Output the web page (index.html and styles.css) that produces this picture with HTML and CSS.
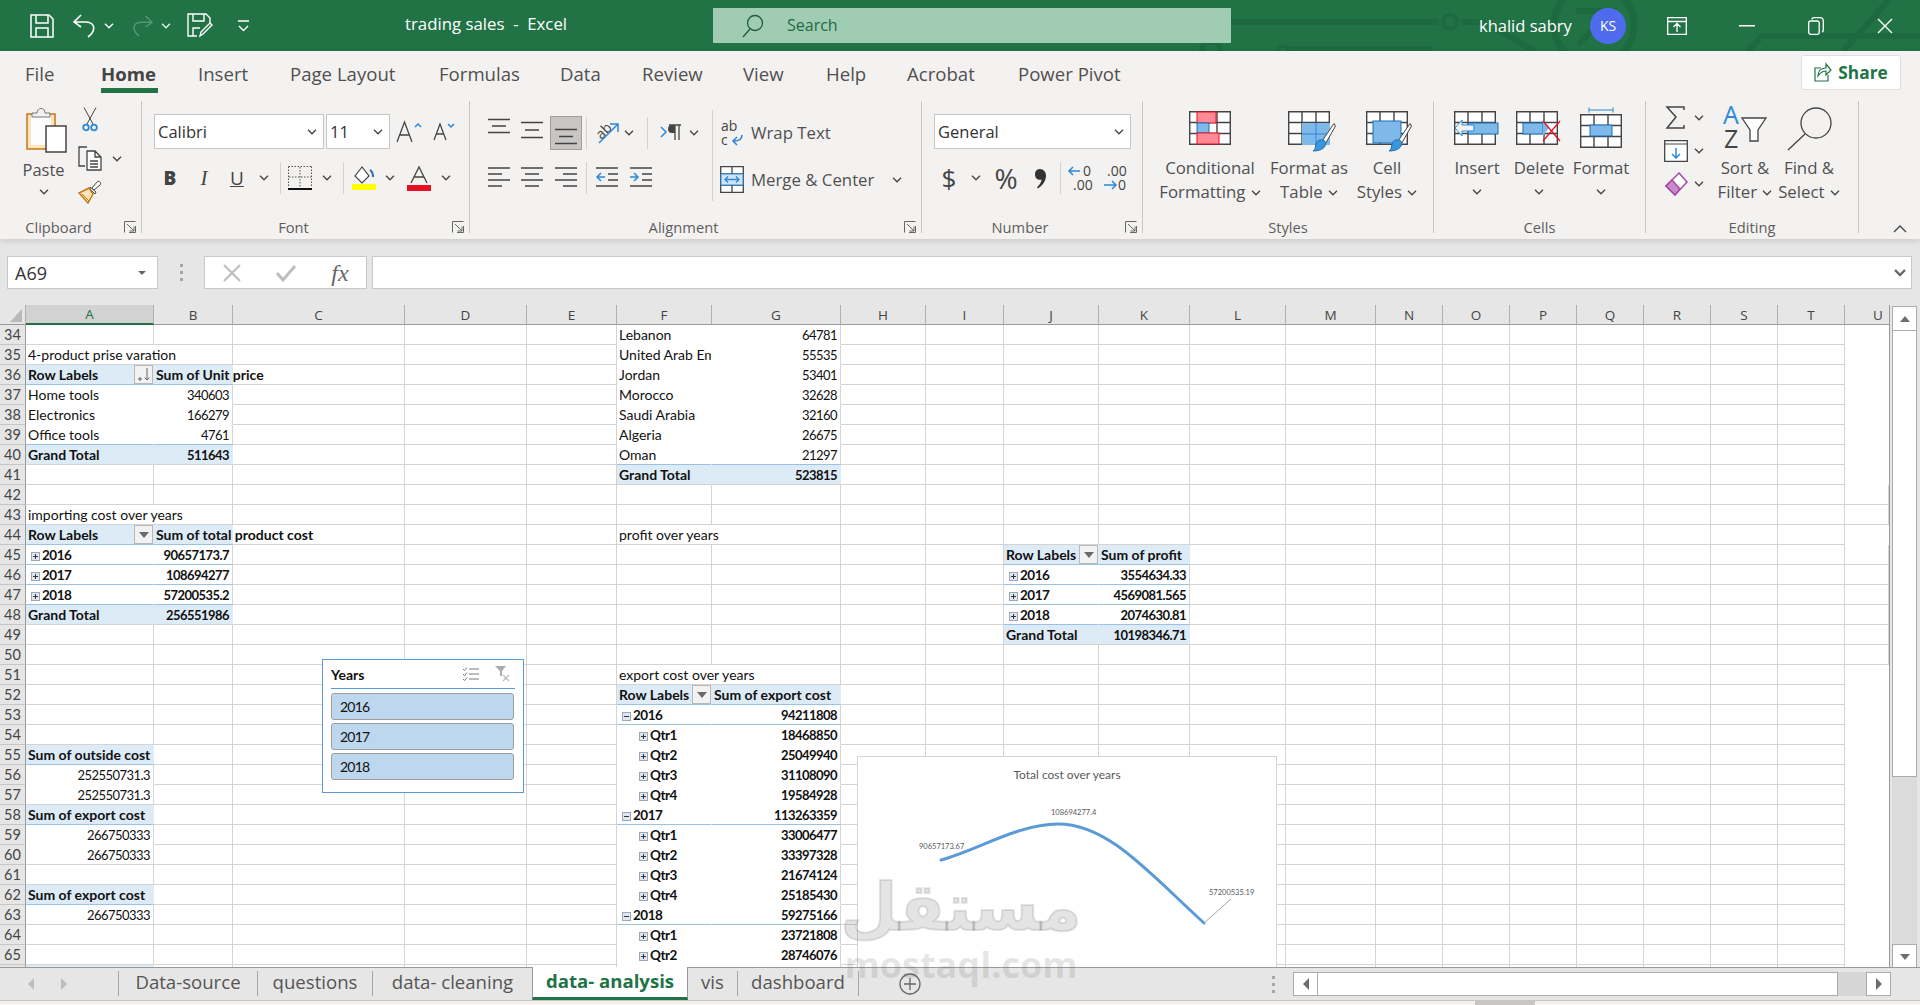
FILE: index.html
```html
<!DOCTYPE html>
<html lang="en">
<head>
<meta charset="utf-8">
<title>trading sales - Excel</title>
<link rel="stylesheet" href="styles.css">
</head>
<body>
<svg class="defs" width="0" height="0">
  <symbol id="chev" viewBox="0 0 10 6"><path d="M1 .8l4 4 4-4" fill="none" stroke="#444" stroke-width="1.3"/></symbol>
  <symbol id="chevw" viewBox="0 0 10 6"><path d="M1 .8l4 4 4-4" fill="none" stroke="#fff" stroke-width="1.3"/></symbol>
  <symbol id="launch" viewBox="0 0 12 12"><path d="M.5 11.5V.5h11M11.5 5v6.5H5M3 3l7 7M10 5.5V10H5.5" fill="none" stroke="#666" stroke-width="1"/></symbol>
  <symbol id="grid" viewBox="0 0 42 34"><path d="M.7.7h40.6v32.6H.7zM14 .7v32.6M28 .7v32.6M.7 11.5h40.6M.7 22.5h40.6" fill="#fff" stroke="#444" stroke-width="1.4"/></symbol>
  <symbol id="brush" viewBox="0 0 24 30"><path d="M22 1.5L10 19l3.5 2.5L23.5 4z" fill="#fff" stroke="#444"/><path d="M8 18c4-1 7 2 5 6-2 4-8 5-12 5 3-2 2-4 3-7 .5-2 2-4 4-4z" fill="#3a96dd" stroke="#1a6fb5"/></symbol>
</svg>

<div class="page">
<header class="titlebar">
  <svg class="circuit" width="1920" height="51" viewBox="0 0 1920 51"><g fill="none" stroke="#1e6a40" stroke-width="6"><path d="M1231 22h208M1461 22h24"/><circle cx="1450" cy="22" r="7" stroke-width="4"/><circle cx="1211" cy="50" r="9"/><circle cx="1283" cy="51" r="5" stroke-width="4"/><path d="M1290 49h142"/><circle cx="1594" cy="25" r="40" stroke-width="7"/><path d="M1576 11h34l-32 34"/><path d="M1494 28l41 23M1748 51l14-15h158M1843 51l46-51"/></g></svg>
  <div class="qat">
    <svg class="js" width="24" height="24" viewBox="0 0 24 24" fill="none" stroke="#fff" stroke-width="1.5"><path d="M1 1h18l4 4v18H1zM6 1v8h12V1M6 23v-9h12v9"/></svg>
    <svg width="24" height="24" viewBox="0 0 24 24" fill="none" stroke="#fff" stroke-width="1.6"><path d="M8 1L1 8l7 5M1 8h11c10 0 12 8 3 15"/></svg>
    <svg class="c10" width="10" height="6"><use href="#chevw"/></svg>
    <svg class="je faded" width="22" height="24" viewBox="0 0 24 24" fill="none" stroke="#5a9c78" stroke-width="1.6"><path d="M16 1l7 7-7 5M23 8H12C2 8 0 16 9 23"/></svg>
    <svg class="c10 faded" width="10" height="6"><use href="#chevw"/></svg>
    <svg class="je" width="25" height="25" viewBox="0 0 25 25" fill="none" stroke="#fff" stroke-width="1.4"><path d="M10 23H1V1h18l4 4v5M6 1v7h11V1M6 23v-8h7"/><path d="M13 23l1-4 9-9 2 2-9 9z"/></svg>
    <svg width="11" height="12" viewBox="0 0 11 12" fill="none" stroke="#fff" stroke-width="1.4"><path d="M0 1h11M1 6l4.500 4.500L10 6"/></svg>
  </div>
  <div class="doc-title">trading sales&nbsp; -&nbsp; Excel</div>
  <div class="search">
    <svg width="22" height="24" viewBox="0 0 22 24" fill="none" stroke="#1f5e3a" stroke-width="1.3"><circle cx="13" cy="9" r="7.500"/><path d="M8 15L1 23"/></svg>
    <span>Search</span>
  </div>
  <div class="spacer"></div>
  <div class="win">
    <span class="user">khalid sabry</span>
    <span class="avatar">KS</span>
    <svg width="20" height="18" viewBox="0 0 20 18" fill="none" stroke="#fff" stroke-width="1.300"><path d="M.7.7h18.600v16.600H.7zM.7 4.500h18.600M10 15V7M6.500 10L10 6.500l3.500 3.500"/></svg>
    <svg width="16" height="2"><rect width="16" height="1.500" fill="#fff"/></svg>
    <svg width="16" height="18" viewBox="0 0 16 18" fill="none" stroke="#fff" stroke-width="1.300"><rect x=".7" y="4" width="10.500" height="13.300" rx="2"/><path d="M4 2.500C4 1.200 5 .7 6 .7h6c2 0 3.300 1.300 3.300 3.300v9c0 1-.5 1.800-1.300 2"/></svg>
    <svg width="16" height="16" viewBox="0 0 16 16" fill="none" stroke="#fff" stroke-width="1.400"><path d="M1 1l14 14M15 1L1 15"/></svg>
  </div>
</header>

<section class="ribbon">
  <nav class="tabsrow">
    <a class="rt t-file">File</a><a class="rt t-home">Home</a><a class="rt t-ins">Insert</a><a class="rt t-pl">Page Layout</a><a class="rt t-fo">Formulas</a><a class="rt t-da">Data</a><a class="rt t-re">Review</a><a class="rt t-vi">View</a><a class="rt t-he">Help</a><a class="rt t-ac">Acrobat</a><a class="rt t-pp">Power Pivot</a>
    <button class="share">
      <svg width="18" height="19" viewBox="0 0 18 19" fill="none" stroke="#217346" stroke-width="1.200"><path d="M7 5H1v13h13v-6"/><path d="M4 13c0-5 3-8 8-8V1l5 6-5 5V8c-4 0-6 2-8 5z"/></svg>
      Share
    </button>
  </nav>
  <div class="groups">
    <section class="grp g-clip">
      <div class="main clip-main">
        <div class="paste">
          <svg width="41" height="46" viewBox="0 0 41 46"><path d="M1 7h28v35H1z" fill="#ffe6b8" stroke="#c8741a" stroke-width="1.500"/><path d="M5 10h20v28H5z" fill="#fdfdfd"/><path d="M6 10V6h5c0-6 8-6 8 0h5v4z" fill="#f3f2f1" stroke="#777"/><path d="M20 19h20v26H20z" fill="#fff" stroke="#444" stroke-width="1.500"/></svg>
          <span class="paste-t">Paste</span>
          <svg class="pch" width="10" height="6"><use href="#chev"/></svg>
        </div>
        <div class="clip-small">
          <svg class="c-sc" width="16" height="25" viewBox="0 0 16 25" fill="none"><path d="M2 .5L11 17M14 .5L5 17" stroke="#444"/><circle cx="4" cy="20.500" r="2.800" stroke="#2b88d8" stroke-width="1.800"/><circle cx="12" cy="20.500" r="2.800" stroke="#2b88d8" stroke-width="1.800"/></svg>
          <span></span>
          <svg class="c-co" width="24" height="25" viewBox="0 0 24 25" fill="none" stroke="#444" stroke-width="1.300"><path d="M9 1H1v19h6"/><path d="M9 5h8l6 6v13H9zM17 5v6h6M12 15h8M12 18h8M12 21h8" fill="#fff"/></svg>
          <svg width="10" height="6"><use href="#chev"/></svg>
          <svg class="c-br" width="24" height="24" viewBox="0 0 24 24"><path d="M14 8l5-6c2-2 5 1 3 3l-6 5z" fill="#fff" stroke="#444"/><path d="M12 7l6 5-1 2-5-5z" fill="#fff" stroke="#444"/><path d="M11 8L1 13l9 10 5-9z" fill="#fde3b5" stroke="#c8741a" stroke-width="1.400"/><path d="M4 14l7 7" stroke="#c8741a"/></svg>
        </div>
      </div>
      <div class="glabel l">Clipboard</div>
      <svg class="launch" width="12" height="12"><use href="#launch"/></svg>
    </section>

    <section class="grp g-font">
      <div class="main pad-top">
        <div class="font-r1">
          <div class="sel">Calibri<svg width="10" height="6"><use href="#chev"/></svg></div>
          <div class="sel sel-size">11<svg width="10" height="6"><use href="#chev"/></svg></div>
          <svg width="26" height="22" viewBox="0 0 26 22" fill="none" stroke="#444" stroke-width="1.300"><path d="M1 21L8.500 1 16 21M4 14h9"/><path d="M19 6l3-3 3 3" stroke="#2b88d8" stroke-width="1.500"/></svg>
          <svg width="22" height="18" viewBox="0 0 22 18" fill="none" stroke="#444" stroke-width="1.300"><path d="M1 17L7 1l6 16M3.500 11h7"/><path d="M15 1l3 3 3-3" stroke="#2b88d8" stroke-width="1.500"/></svg>
        </div>
        <div class="font-r2">
          <b class="fb-b">B</b><i class="fb-i">I</i><u class="fb-u">U</u>
          <svg width="10" height="6"><use href="#chev"/></svg><span class="vsep"></span>
          <svg width="24" height="24" viewBox="0 0 24 24" fill="none"><path d="M.5.500h23M.5.500v21M23.500.500v21M12 1v20M1 11h22" stroke="#555" stroke-dasharray="1.500 1.500"/><path d="M0 23h24" stroke="#111" stroke-width="2"/></svg>
          <svg width="10" height="6"><use href="#chev"/></svg><span class="vsep"></span>
          <svg width="24" height="24" viewBox="0 0 24 24"><path d="M10 1l-7 9 7 7 7-7z" fill="#fff" stroke="#444" stroke-width="1.200"/><path d="M18 4c3 2 3 5 3 7" stroke="#2b6cb0" stroke-width="2" fill="none"/><rect y="18" width="24" height="6" fill="#ffff00"/></svg>
          <svg width="10" height="6"><use href="#chev"/></svg>
          <svg width="24" height="25" viewBox="0 0 24 25"><path d="M4 17L12 1l8 16M7 11h10" fill="none" stroke="#444" stroke-width="1.300"/><rect y="19" width="24" height="6" fill="#e81123"/></svg>
          <svg width="10" height="6"><use href="#chev"/></svg>
        </div>
      </div>
      <div class="glabel l">Font</div>
      <svg class="launch" width="12" height="12"><use href="#launch"/></svg>
    </section>

    <section class="grp g-align">
      <div class="main al-main">
        <div class="al-left">
          <div class="al-r1">
            <svg class="bars" width="22" height="30" viewBox="0 0 22 30"><path d="M0 1.500h22M4 8h14M0 14.500h22"/></svg>
            <svg class="bars" width="22" height="30" viewBox="0 0 22 30"><path d="M0 4.500h22M4 12h14M0 19.500h22"/></svg>
            <span class="sel-btn"><svg class="bars" width="22" height="30" viewBox="0 0 22 30"><path d="M0 11.500h22M4 18.500h14M0 25.500h22"/></svg></span>
            <span class="vsep"></span>
            <svg width="25" height="25" viewBox="0 0 25 25"><text x="0" y="15" class="mini" transform="rotate(-45 9 10)">ab</text><path d="M4 23L22 5M15 4h8v8" fill="none" stroke="#2b88d8" stroke-width="1.500"/></svg>
            <svg width="10" height="6"><use href="#chev"/></svg>
            <span class="vsep"></span>
            <svg width="22" height="18" viewBox="0 0 22 18"><path d="M1 3l5 5-5 5" fill="none" stroke="#2b88d8" stroke-width="1.500"/><path d="M9 1h12M15 1v15M19 1v15" stroke="#444" stroke-width="1.300" fill="none"/><path d="M9 1h6v8H12a4 4 0 010-8z" fill="#444"/></svg>
            <svg width="10" height="6"><use href="#chev"/></svg>
          </div>
          <div class="al-r2">
            <svg class="bars" width="22" height="24" viewBox="0 0 22 24"><path d="M0 2h22M0 8h14M0 14h22M0 20h14"/></svg>
            <svg class="bars" width="22" height="24" viewBox="0 0 22 24"><path d="M0 2h22M4 8h14M0 14h22M4 20h14"/></svg>
            <svg class="bars" width="22" height="24" viewBox="0 0 22 24"><path d="M0 2h22M8 8h14M0 14h22M8 20h14"/></svg>
            <span class="vsep"></span>
            <svg width="22" height="24" viewBox="0 0 22 24"><path d="M0 2h22M12 8h10M12 14h10M0 20h22" stroke="#444" stroke-width="1.400"/><path d="M9 11H1M5 7l-4 4 4 4" fill="none" stroke="#2b88d8" stroke-width="1.500"/></svg>
            <svg width="22" height="24" viewBox="0 0 22 24"><path d="M0 2h22M12 8h10M12 14h10M0 20h22" stroke="#444" stroke-width="1.400"/><path d="M0 11h8M4 7l4 4-4 4" fill="none" stroke="#2b88d8" stroke-width="1.500"/></svg>
          </div>
        </div>
        <div class="al-right">
          <div class="al-wrap">
            <svg width="22" height="26" viewBox="0 0 22 26"><text x="0" y="11" class="mini2">ab</text><text x="0" y="25" class="mini2">c</text><path d="M21 15c0 4-3 6-8 6M16 17l-4 4 4 4" fill="none" stroke="#2b88d8" stroke-width="1.500"/></svg>
            <span>Wrap Text</span><span></span>
          </div>
          <div class="al-wrap">
            <svg width="24" height="27" viewBox="0 0 24 27"><path d="M.7.700h22.600v25.600H.7zM.7 8h22.600M.7 19h22.600M12 .7V8M12 19v7" fill="#fff" stroke="#444" stroke-width="1.300"/><rect x="1" y="8" width="22" height="11" fill="#cfe5f7" stroke="#2b88d8"/><path d="M5 13.500h14M8 10.500l-3 3 3 3M16 10.500l3 3-3 3" fill="none" stroke="#2b88d8" stroke-width="1.300"/></svg>
            <span>Merge &amp; Center</span>
            <svg width="10" height="6"><use href="#chev"/></svg>
          </div>
        </div>
      </div>
      <div class="glabel l">Alignment</div>
      <svg class="launch" width="12" height="12"><use href="#launch"/></svg>
    </section>

    <section class="grp g-num">
      <div class="main pad-top">
        <div class="sel sel-num">General<svg width="10" height="6"><use href="#chev"/></svg></div>
        <div class="num-r2">
          <span class="sym">$</span>
          <svg width="10" height="6"><use href="#chev"/></svg>
          <span class="sym pct">%</span>
          <svg width="12" height="21" viewBox="0 0 12 21"><path d="M6 1c3.500 0 6 3 6 6.500 0 5.500-3.500 10-8 13l-1-1.200c2.500-2.200 4.500-5 4.500-7.800-3 1-6.500-.8-6.500-5C1 3.200 3 1 6 1z" fill="#333"/></svg>
          <span class="vsep"></span>
          <svg width="25" height="26" viewBox="0 0 25 26"><text x="15" y="11" class="mini2">0</text><text x="5" y="25" class="mini2">.00</text><path d="M12 6H1M5 2L1 6l4 4" fill="none" stroke="#2b88d8" stroke-width="1.500"/></svg>
          <span></span>
          <svg width="25" height="26" viewBox="0 0 25 26"><text x="4" y="11" class="mini2">.00</text><text x="15" y="25" class="mini2">0</text><path d="M1 20h12M9 16l4 4-4 4" fill="none" stroke="#2b88d8" stroke-width="1.500"/></svg>
        </div>
      </div>
      <div class="glabel l">Number</div>
      <svg class="launch" width="12" height="12"><use href="#launch"/></svg>
    </section>

    <section class="grp g-styles">
      <div class="main bigs">
        <div class="big w100">
          <div class="bi">
            <svg width="42" height="34" viewBox="0 0 42 34"><use href="#grid"/><rect x="8" y="1" width="19" height="11" fill="#ff8a95" stroke="#e81123"/><rect x="8" y="12" width="12" height="10" fill="#7fb9ea" stroke="#1a6fb5"/><rect x="8" y="22" width="22" height="11" fill="#ff8a95" stroke="#e81123"/></svg>
          </div>
          <span>Conditional</span>
          <span>Formatting <svg width="10" height="6"><use href="#chev"/></svg></span>
        </div>
        <div class="big w98">
          <div class="bi sh">
            <svg width="48" height="42" viewBox="0 0 48 42"><svg width="42" height="34" viewBox="0 0 42 34"><use href="#grid"/></svg><rect x="14" y="12" width="28" height="22" fill="#7fb9ea"/><path d="M28 12v22M14 23h28" stroke="#2b88d8"/><svg x="24" y="11" width="24" height="30" viewBox="0 0 24 30"><use href="#brush"/></svg></svg>
          </div>
          <span>Format as</span>
          <span>Table <svg width="10" height="6"><use href="#chev"/></svg></span>
        </div>
        <div class="big w58">
          <div class="bi sh">
            <svg width="48" height="42" viewBox="0 0 48 42"><svg width="42" height="34" viewBox="0 0 42 34"><use href="#grid"/></svg><rect x="7" y="10" width="28" height="22" fill="#7fb9ea" stroke="#1a6fb5"/><svg x="22" y="11" width="24" height="30" viewBox="0 0 24 30"><use href="#brush"/></svg></svg>
          </div>
          <span>Cell</span>
          <span>Styles <svg width="10" height="6"><use href="#chev"/></svg></span>
        </div>
      </div>
      <div class="glabel">Styles</div>
    </section>

    <section class="grp g-cells">
      <div class="main bigs">
        <div class="big w62">
          <div class="bi">
            <svg width="46" height="34" viewBox="0 0 46 34"><svg width="42" height="34" viewBox="0 0 42 34"><use href="#grid"/></svg><rect x="14" y="12" width="30" height="11" fill="#7fb9ea" stroke="#1a6fb5"/><path d="M20 14H8V9l-7 8 7 8v-5h12z" fill="#f3f2f1" stroke="#2b88d8"/></svg>
          </div>
          <span>Insert</span>
          <svg class="ch2" width="10" height="6"><use href="#chev"/></svg>
        </div>
        <div class="big w62">
          <div class="bi">
            <svg width="46" height="34" viewBox="0 0 46 34"><svg width="42" height="34" viewBox="0 0 42 34"><use href="#grid"/></svg><rect x="7" y="12" width="20" height="11" fill="#7fb9ea" stroke="#1a6fb5"/><path d="M27 10l6 7-6 8z" fill="#7fb9ea"/><path d="M27 10l17 20M44 10L27 30" stroke="#e81123" stroke-width="1.300"/></svg>
          </div>
          <span>Delete</span>
          <svg class="ch2" width="10" height="6"><use href="#chev"/></svg>
        </div>
        <div class="big w62">
          <div class="bi bi-tall">
            <svg width="42" height="41" viewBox="0 0 42 41"><path d="M9 .5v5M33 .5v5M9 3h24" stroke="#2b88d8"/><svg y="7" width="42" height="34" viewBox="0 0 42 34"><use href="#grid"/></svg><rect x="10" y="18" width="22" height="11" fill="#7fb9ea" stroke="#1a6fb5"/></svg>
          </div>
          <span>Format</span>
          <svg class="ch2" width="10" height="6"><use href="#chev"/></svg>
        </div>
      </div>
      <div class="glabel">Cells</div>
    </section>

    <section class="grp g-edit">
      <div class="main bigs">
        <div class="ed-small">
          <svg width="19" height="23" viewBox="0 0 19 23" fill="none" stroke="#444" stroke-width="1.500"><path d="M18 4V1H1l9 10L1 22h17v-3"/></svg>
          <svg width="10" height="6"><use href="#chev"/></svg>
          <svg width="24" height="22" viewBox="0 0 24 22"><path d="M.7.700h22.600v20.600H.7z" fill="#fff" stroke="#444" stroke-width="1.300"/><path d="M1 4h22" stroke="#444"/><path d="M12 8v10M8 14l4 4 4-4" fill="none" stroke="#2b88d8" stroke-width="1.500"/></svg>
          <svg width="10" height="6"><use href="#chev"/></svg>
          <svg width="24" height="24" viewBox="0 0 24 24"><path d="M15 1l8 9-12 13-9-9z" fill="#fff" stroke="#a349a4" stroke-width="1.500"/><path d="M8 8l8 9-5 6-9-9z" fill="#c78bc8" stroke="#a349a4" stroke-width="1.500"/></svg>
          <svg width="10" height="6"><use href="#chev"/></svg>
        </div>
        <div class="big w62">
          <div class="bi bi-tall">
            <svg width="44" height="42" viewBox="0 0 44 42"><text x="0" y="17" class="az blue">A</text><text x="1" y="41" class="az">Z</text><path d="M19 11h24l-8 12v11h-8V23z" fill="#fff" stroke="#444" stroke-width="1.300"/></svg>
          </div>
          <span>Sort &amp;</span>
          <span>Filter <svg width="10" height="6"><use href="#chev"/></svg></span>
        </div>
        <div class="big w66">
          <div class="bi bi-tall">
            <svg width="45" height="44" viewBox="0 0 45 44" fill="none" stroke="#444" stroke-width="1.300"><circle cx="29" cy="16" r="15"/><path d="M18 27L1 43"/></svg>
          </div>
          <span>Find &amp;</span>
          <span>Select <svg width="10" height="6"><use href="#chev"/></svg></span>
        </div>
      </div>
      <div class="glabel">Editing</div>
    </section>
    <svg class="collapse" width="14" height="8" viewBox="0 0 14 8" fill="none" stroke="#444" stroke-width="1.300"><path d="M1 7l6-6 6 6"/></svg>
  </div>
</section>

<section class="formula">
  <div class="namebox">A69<svg width="8" height="4" viewBox="0 0 8 4"><path d="M0 0h8L4 4z" fill="#666"/></svg></div>
  <div class="fdots"><i></i><i></i><i></i></div>
  <div class="fbtns">
    <svg width="18" height="18" viewBox="0 0 18 18" stroke="#bdbdbd" stroke-width="2"><path d="M1 1l16 16M17 1L1 17"/></svg>
    <svg width="20" height="18" viewBox="0 0 20 18" fill="none" stroke="#bdbdbd" stroke-width="3"><path d="M1 9l6 7L19 2"/></svg>
    <span class="fx">fx</span>
  </div>
  <div class="finput"><svg width="12" height="8" viewBox="0 0 12 8" fill="none" stroke="#666" stroke-width="2.400"><path d="M1 1l5 5 5-5"/></svg></div>
</section>

<section class="sheet">
  <div class="grid">
    <table>
      <colgroup><col class="c0"><col class="ca"><col class="cb"><col class="cc"><col class="cd"><col class="ce"><col class="cf"><col class="cg"><col class="ch"><col class="ci"><col class="cj"><col class="ck"><col class="cl"><col class="cm"><col class="cn"><col class="cn"><col class="cn"><col class="cn"><col class="cn"><col class="cn"><col class="cn"><col class="cu"></colgroup>
      <thead><tr><th class="corner"><span></span></th><th class="act">A</th><th>B</th><th>C</th><th>D</th><th>E</th><th>F</th><th>G</th><th>H</th><th>I</th><th>J</th><th>K</th><th>L</th><th>M</th><th>N</th><th>O</th><th>P</th><th>Q</th><th>R</th><th>S</th><th>T</th><th class="hu">U</th></tr></thead>
      <tbody>
      <tr><th>34<td><td><td><td><td><td class="pv">Lebanon<td class="pv e n">64781<td><td><td><td><td><td><td><td><td><td><td><td><td>
      <tr><th>35<td colspan="2">4-product prise varation<td><td><td><td class="pv clip">United Arab Emirates<td class="pv e n">55535<td><td><td><td><td><td><td><td><td><td><td><td><td>
      <tr><th>36<td class="hd"><div class="lbl">Row Labels<span class="fbtn"><svg width="13" height="13" viewBox="0 0 13 13" fill="none" stroke="#555"><path d="M10 0v12M7.500 9.500l2.500 2.500 2.500-2.500M1 11h4M3 9v4" stroke-width=".9"/></svg></span></div><td class="hd">Sum of Unit price<td><td><td><td class="pv">Jordan<td class="pv e n">53401<td><td><td><td><td><td><td><td><td><td><td><td><td>
      <tr><th>37<td class="pv">Home tools<td class="pv e n">340603<td><td><td><td class="pv">Morocco<td class="pv e n">32628<td><td><td><td><td><td><td><td><td><td><td><td><td>
      <tr><th>38<td class="pv">Electronics<td class="pv e n">166279<td><td><td><td class="pv">Saudi Arabia<td class="pv e n">32160<td><td><td><td><td><td><td><td><td><td><td><td><td>
      <tr><th>39<td class="pv ln">Office tools<td class="pv e ln n">4761<td><td><td><td class="pv">Algeria<td class="pv e n">26675<td><td><td><td><td><td><td><td><td><td><td><td><td>
      <tr><th>40<td class="tot">Grand Total<td class="tot n">511643<td><td><td><td class="pv ln">Oman<td class="pv e ln n">21297<td><td><td><td><td><td><td><td><td><td><td><td><td>
      <tr><th>41<td><td><td><td><td><td class="tot">Grand Total<td class="tot n">523815<td><td><td><td><td><td><td><td><td><td><td><td><td>
      <tr><th>42<td><td><td><td><td><td><td><td><td><td><td><td><td><td><td><td><td><td><td><td><td>
      <tr><th>43<td colspan="2">importing cost over years<td><td><td><td><td><td><td><td><td><td><td><td><td><td><td><td><td><td><td>
      <tr><th>44<td class="hd"><div class="lbl">Row Labels<span class="fbtn"><i class="arr"></i></span></div><td class="hd">Sum of total product cost<td><td><td><td colspan="2">profit over years<td><td><td><td><td><td><td><td><td><td><td><td><td>
      <tr><th>45<td class="pv ln y"><i class="ex"></i>2016<td class="pv e ln n y">90657173.7<td><td><td><td><td><td><td><td class="hd"><div class="lbl">Row Labels<span class="fbtn"><i class="arr"></i></span></div><td class="hd">Sum of profit<td><td><td><td><td><td><td><td><td><td><td>
      <tr><th>46<td class="pv ln y"><i class="ex"></i>2017<td class="pv e ln n y">108694277<td><td><td><td><td><td><td><td class="pv ln y"><i class="ex"></i>2016<td class="pv e ln n y">3554634.33<td><td><td><td><td><td><td><td><td><td><td>
      <tr><th>47<td class="pv ln y"><i class="ex"></i>2018<td class="pv e ln n y">57200535.2<td><td><td><td><td><td><td><td class="pv ln y"><i class="ex"></i>2017<td class="pv e ln n y">4569081.565<td><td><td><td><td><td><td><td><td><td><td>
      <tr><th>48<td class="tot">Grand Total<td class="tot n">256551986<td><td><td><td><td><td><td><td class="pv ln y"><i class="ex"></i>2018<td class="pv e ln n y">2074630.81<td><td><td><td><td><td><td><td><td><td><td>
      <tr><th>49<td><td><td><td><td><td><td><td><td><td class="tot">Grand Total<td class="tot n">10198346.71<td><td><td><td><td><td><td><td><td><td><td>
      <tr><th>50<td><td><td><td><td><td><td><td><td><td><td><td><td><td><td><td><td><td><td><td><td><td>
      <tr><th>51<td><td><td><td><td><td colspan="2">export cost over years<td><td><td><td><td><td><td><td><td><td><td><td><td>
      <tr><th>52<td><td><td><td><td><td class="hd"><div class="lbl">Row Labels<span class="fbtn"><i class="arr"></i></span></div><td class="hd">Sum of export cost<td><td><td><td><td><td><td><td><td><td><td><td><td>
      <tr><th>53<td><td><td><td><td><td class="pv ln y"><i class="ex m"></i>2016<td class="pv e ln n y">94211808<td><td><td><td><td><td><td><td><td><td><td><td><td>
      <tr><th>54<td><td><td><td><td><td class="pv y q"><i class="ex"></i>Qtr1<td class="pv e n y">18468850<td><td><td><td><td><td><td><td><td><td><td><td><td>
      <tr><th>55<td class="hd">Sum of outside cost<td><td><td><td><td class="pv y q"><i class="ex"></i>Qtr2<td class="pv e n y">25049940<td><td><td><td><td><td><td><td><td><td><td><td><td>
      <tr><th>56<td class="pv e n">252550731.3<td><td><td><td><td class="pv y q"><i class="ex"></i>Qtr3<td class="pv e n y">31108090<td><td><td><td><td><td><td><td><td><td><td><td><td>
      <tr><th>57<td class="n">252550731.3<td><td><td><td><td class="pv y q"><i class="ex"></i>Qtr4<td class="pv e n y">19584928<td><td><td><td><td><td><td><td><td><td><td><td><td>
      <tr><th>58<td class="hd">Sum of export cost<td><td><td><td><td class="pv ln y"><i class="ex m"></i>2017<td class="pv e ln n y">113263359<td><td><td><td><td><td><td><td><td><td><td><td><td>
      <tr><th>59<td class="pv e n">266750333<td><td><td><td><td class="pv y q"><i class="ex"></i>Qtr1<td class="pv e n y">33006477<td><td><td><td><td><td><td><td><td><td><td><td><td>
      <tr><th>60<td class="n">266750333<td><td><td><td><td class="pv y q"><i class="ex"></i>Qtr2<td class="pv e n y">33397328<td><td><td><td><td><td><td><td><td><td><td><td><td>
      <tr><th>61<td><td><td><td><td><td class="pv y q"><i class="ex"></i>Qtr3<td class="pv e n y">21674124<td><td><td><td><td><td><td><td><td><td><td><td><td>
      <tr><th>62<td class="hd">Sum of export cost<td><td><td><td><td class="pv y q"><i class="ex"></i>Qtr4<td class="pv e n y">25185430<td><td><td><td><td><td><td><td><td><td><td><td><td>
      <tr><th>63<td class="n">266750333<td><td><td><td><td class="pv ln y"><i class="ex m"></i>2018<td class="pv e ln n y">59275166<td><td><td><td><td><td><td><td><td><td><td><td><td>
      <tr><th>64<td><td><td><td><td><td class="pv y q"><i class="ex"></i>Qtr1<td class="pv e n y">23721808<td><td><td><td><td><td><td><td><td><td><td><td><td>
      <tr><th>65<td><td><td><td><td><td class="pv y q"><i class="ex"></i>Qtr2<td class="pv e n y">28746076<td><td><td><td><td><td><td><td><td><td><td><td><td>
      <tr><th>66<td class="hd"><td><td><td><td><td class="pv"><td class="pv e"><td><td><td><td><td><td><td><td><td><td><td><td><td>
      </tbody>
    </table>

    <aside class="slicer">
      <div class="sl-head"><span>Years</span>
        <svg width="16" height="15" viewBox="0 0 16 15" fill="none" stroke="#777"><path d="M0 2l1.500 1.500L4 .5M0 7l1.500 1.500L4 5.500M0 12l1.500 1.500L4 10.500M6 2h10M6 7h10M6 12h10"/></svg>
        <svg width="16" height="16" viewBox="0 0 16 16"><path d="M0 0h11L7 5v5H5V5z" fill="#aaa"/><path d="M8 9l6 6M14 9l-6 6" stroke="#bbb" stroke-width="1.300"/></svg>
      </div>
      <div class="sl-item">2016</div>
      <div class="sl-item">2017</div>
      <div class="sl-item">2018</div>
    </aside>

    <figure class="chart">
      <figcaption>Total cost over years</figcaption>
      <svg class="chart-svg" width="418" height="211" viewBox="0 0 418 211">
        <path d="M83 103C120 93 160 67 200 67c50 0 90 48 146 99" fill="none" stroke="#5b9bd5" stroke-width="3" stroke-linecap="round"/>
        <path d="M346 166l27-24" fill="none" stroke="#a6a6a6"/>
        <text x="61" y="92" class="dl">90657173.67</text>
        <text x="193" y="58" class="dl">108694277.4</text>
        <text x="351" y="138" class="dl">57200535.19</text>
      </svg>
    </figure>
  </div>

  <div class="vscroll">
    <button class="sb"><i class="tri-up"></i></button>
    <div class="vthumb"></div>
    <div class="vtrack"></div>
    <button class="sb"><i class="tri-down"></i></button>
  </div>
</section>

<footer class="tabbar">
  <div class="tnav"><i class="tl"></i><i class="tr"></i></div>
  <a class="stab w1">Data-source</a><a class="stab w2">questions</a><a class="stab w3">data- cleaning</a><a class="stab active">data- analysis</a><a class="stab w5">vis</a><a class="stab w6">dashboard</a>
  <svg class="addsheet" width="22" height="22" viewBox="0 0 22 22" fill="none" stroke="#666" stroke-width="1.300"><circle cx="11" cy="11" r="10"/><path d="M11 5v12M5 11h12"/></svg>
  <div class="tdots"><i></i><i></i><i></i></div>
  <div class="hscroll">
    <button class="sb hb"><i class="tri-left"></i></button>
    <div class="hthumb"></div>
    <div class="htrack"></div>
    <button class="sb hb"><i class="tri-right"></i></button>
  </div>
</footer>
<div class="status"><span></span></div>

<div class="watermark" lang="ar"><span class="wm-ar" dir="rtl">مستقل</span><span class="wm-en">mostaql.com</span></div>
</div>
</body>
</html>
```

FILE: styles.css
```css
*{box-sizing:border-box}
html,body{margin:0;padding:0}
body{background:#f3f2f1;font-family:"Open Sans",sans-serif;color:#444;overflow:hidden}
svg{display:block;overflow:visible}
.defs{position:absolute}
.page{position:relative;width:1920px;height:1005px;display:flex;flex-direction:column;overflow:hidden}

/* title bar */
.titlebar{position:relative;height:51px;flex:none;background:#217346;display:flex;align-items:center;color:#fff}
.circuit{position:absolute;left:0;top:0}
.titlebar>*:not(.circuit){position:relative}
.qat{display:grid;grid-template-columns:43px 24px 24px 32px 26px 33px 62px;align-items:center;justify-items:center;width:274px;padding-left:30px;flex:none}
.js{justify-self:start}
.je{justify-self:end}
.faded{opacity:.9}
.doc-title{width:439px;padding-left:131px;font-size:16.800px;flex:none;white-space:nowrap;margin-bottom:5px}
.search{width:518px;height:35px;background:#9fccb3;display:flex;align-items:center;gap:23px;padding-left:29px;color:#1f6b42;font-size:16px;flex:none}
.search span{margin-bottom:2px}
.spacer{width:248px;flex:none}
.win{display:grid;grid-template-columns:111px 36px 102px 38px 100px 38px;align-items:center;justify-items:center}
.user{justify-self:start;font-size:16.500px;white-space:nowrap}
.avatar{width:36px;height:36px;border-radius:50%;background:#4f6bed;color:#fff;font-size:14px;display:flex;align-items:center;justify-content:center}

/* ribbon */
.ribbon{height:188px;flex:none;background:#f3f2f1;position:relative;z-index:2;box-shadow:0 2px 6px rgba(0,0,0,.12)}
.tabsrow{height:50px;position:relative;display:flex;font-size:18.600px;color:#505050}
.rt{height:37px;line-height:46px;white-space:nowrap;display:block;flex:none}
.t-file{margin-left:25px;width:76px}
.t-home{width:97px;font-weight:700;color:#444;font-size:18.600px}
.t-home::after{content:"";display:block;width:57px;height:5px;background:#217346;margin-top:-9px}
.t-ins{width:92px}.t-pl{width:149px}.t-fo{width:121px}.t-da{width:82px}.t-re{width:101px}.t-vi{width:83px}.t-he{width:81px}.t-ac{width:111px}.t-pp{width:140px}
.share{position:absolute;left:1801px;top:4px;width:100px;height:35px;background:#fff;border:1px solid #e1dfdd;border-radius:3px;display:flex;align-items:center;justify-content:center;gap:6px;color:#217346;font:700 17.300px "Open Sans",sans-serif;padding:0}
.groups{display:flex;height:132px;position:relative}
.grp{position:relative;display:flex;flex-direction:column;border-right:1px solid #c8c6c4;flex:none;height:132px}
.g-clip{width:142px}.g-font{width:328px}.g-align{width:452px}.g-num{width:221px}.g-styles{width:291px}.g-cells{width:212px}.g-edit{width:213px}
.main{height:115px;flex:none}
.glabel{height:22px;line-height:22px;text-align:center;font-size:14.700px;color:#605e5c;flex:none}
.glabel.l{padding-right:24px}
.launch{position:absolute;right:5px;bottom:0}
.collapse{position:absolute;left:1893px;top:124px}
.vsep{display:block;width:1px;height:34px;background:#d4d2d0}

/* clipboard */
.clip-main{display:flex;padding:6px 0 0 26px}
.paste{width:41px;display:flex;flex-direction:column;align-items:center;font-size:16.500px;color:#505050}
.paste-t{margin:4px 6px 0 0;line-height:26px}
.pch{margin:6px 6px 0 0}
.clip-small{display:grid;grid-template-columns:24px 30px;grid-template-rows:33px 37px 30px;margin-left:11px;justify-items:center;align-items:center;height:100px}
.c-sc{align-self:start}
.c-br{grid-column:1}

/* selects */
.pad-top{padding-top:13px}
.sel{height:35px;background:#fff;border:1px solid #c8c6c4;display:flex;align-items:center;justify-content:space-between;padding:0 6px 0 3px;font-size:16.500px;color:#333}
.g-font .main{padding-left:12px}
.font-r1{display:grid;grid-template-columns:170px 66px 37px 34px;align-items:center;justify-items:center}
.font-r1 .sel{width:170px}
.font-r1 .sel-size{width:64px;justify-self:end}
.font-r2{display:grid;grid-template-columns:32px 36px 30px 24px 8px 32px 22px 10px 32px 20px 38px 16px;height:36px;margin-top:11px;align-items:center;justify-items:center}
.font-r2 .vsep{height:32px}
.fb-b,.fb-i,.fb-u{font-size:19px;color:#444;line-height:1}
.fb-b{font-weight:800}
.fb-i{font-family:"Liberation Serif",serif;font-size:21px}

/* alignment */
.al-main{display:flex;padding:14px 0 0 13px}
.al-left{width:229px;flex:none}
.al-r1{display:grid;grid-template-columns:32px 34px 34px 7px 34px 10px 26px 22px 24px;height:35px;align-items:center;justify-items:center}
.al-r2{display:grid;grid-template-columns:32px 34px 34px 7px 34px 34px;height:36px;margin-top:10px;align-items:center;justify-items:center}
.al-r1 .vsep,.al-r2 .vsep{height:32px}
.bars path{stroke:#444;stroke-width:1.500;fill:none}
.sel-btn{width:32px;height:34px;background:#c8c6c4;border:1px solid #a19f9d;display:flex;align-items:center;justify-content:center}
.mini{font:14px "Open Sans",sans-serif;fill:#444}
.mini2{font:14px "Open Sans",sans-serif;fill:#444}
.al-right{border-left:1px solid #d4d2d0;height:91px;margin-top:-5px;display:flex;flex-direction:column;gap:12px;padding-top:5px;flex:none}
.al-wrap{display:grid;grid-template-columns:38px 136px 20px;height:35px;align-items:center;justify-items:center;font-size:16.800px;color:#505050;white-space:nowrap}
.al-wrap span{justify-self:start}

/* number */
.g-num .main{padding-left:12px}
.sel-num{width:197px}
.num-r2{display:grid;grid-template-columns:30px 24px 36px 32px 8px 32px 2px 34px;height:36px;margin-top:11px;align-items:center;justify-items:center}
.num-r2 .vsep{height:32px}
.sym{font-size:26px;line-height:1;color:#444}
.pct{font-size:28px}

/* big buttons */
.bigs{display:flex}
.g-styles .bigs{padding-left:17px}
.g-cells .bigs{padding-left:12px}
.big{display:flex;flex-direction:column;align-items:center;font-size:16.800px;color:#505050;line-height:23.500px;white-space:nowrap}
.big span svg{display:inline-block;vertical-align:middle;margin-left:1px}
.w100{width:100px}.w98{width:98px}.w58{width:58px}.w62{width:62px}.w66{width:66px}
.bi{height:55px;padding-top:10px;flex:none}
.bi.sh{padding-left:5px}
.bi-tall{padding-top:6px}
.big .ch2{margin-top:9px}
.ed-small{display:grid;grid-template-columns:27px 20px;grid-template-rows:33px 33px 33px;width:68px;padding-left:16px;justify-items:center;align-items:center}
.az{font:25px "Open Sans",sans-serif;fill:#444}
.az.blue{fill:#2b88d8}

/* formula */
.formula{height:66px;flex:none;background:#e6e6e6;display:flex;padding-top:17px;align-items:flex-start}
.namebox{width:151px;height:33px;margin-left:7px;background:#fff;border:1px solid #c8c8c8;display:flex;align-items:center;justify-content:space-between;padding:0 11px 0 7px;font-size:18px;color:#333}
.fdots{width:46px;height:33px;display:flex;flex-direction:column;align-items:center;justify-content:center;gap:4px}
.fdots i,.tdots i{display:block;width:3px;height:3px;background:#a6a6a6}
.fbtns{width:163px;height:33px;background:#fff;border:1px solid #c8c8c8;display:grid;grid-template-columns:54px 54px 54px;align-items:center;justify-items:center}
.fx{font:italic 400 24px "Liberation Serif",serif;color:#666;line-height:1}
.finput{width:1540px;height:33px;margin-left:5px;background:#fff;border:1px solid #c8c8c8;display:flex;align-items:center;justify-content:flex-end;padding-right:5px}

/* sheet */
.sheet{height:662px;flex:none;display:flex;background:#e6e6e6}
.grid{position:relative;width:1890px;height:662px;overflow:hidden;background:#fff;flex:none;border-right:1px solid #9a9a9a}
table{border-collapse:separate;border-spacing:0;table-layout:fixed;width:1889px;font:14px Lato,sans-serif;color:#111}
.c0{width:26px}.ca{width:128px}.cb{width:79px}.cc{width:172px}.cd{width:122px}.ce{width:90px}.cf{width:95px}.cg{width:129px}.ch{width:85px}.ci{width:78px}.cj{width:95px}.ck{width:91px}.cl{width:96px}.cm{width:90px}.cn{width:67px}.cu{width:44px}
thead th{height:20px;background:#e6e6e6;border-right:1px solid #b0b0b0;border-bottom:1px solid #9a9a9a;font:400 13.500px "Open Sans",sans-serif;color:#444;padding:0}
thead th.act{background:#d2d2d2;color:#217346;border-bottom:2px solid #217346}
thead th.hu{border-right:0;text-align:left;padding-left:28px}
.corner{position:relative}
.corner span{display:block;width:12px;height:13px;margin:2px 3px 0 auto;background:#b9b9b9;clip-path:polygon(100% 0,100% 100%,0 100%)}
tbody th{height:20px;background:#e6e6e6;border-right:1px solid #9a9a9a;border-bottom:1px solid #c6c6c6;font:400 14.500px Lato,sans-serif;color:#444;padding:0;text-align:center}
td{height:20px;padding:0 3px 0 2px;border-right:1px solid #d4d4d4;border-bottom:1px solid #d4d4d4;white-space:nowrap;overflow:visible}
.pv{border-right-color:#fff;border-bottom-color:#fff;background:#fff}
.pv.e{border-right-color:#d4d4d4}
.clip{overflow:hidden}
.hd,.tot{background:#ddebf7;font-weight:700;border-right-color:#ddebf7}
.hd{border-bottom-color:#9bc2e6}
.ln,.pv.ln{border-bottom-color:#9bc2e6}
.y{font-weight:700;font-size:13.500px;letter-spacing:-.5px}
.n{text-align:right;font-size:13px;letter-spacing:-.55px;padding-right:3px}
.lbl{display:flex;align-items:center;justify-content:space-between;margin-right:-3px}
.fbtn{width:19px;height:19px;background:#f2f2f2;border:1px solid #b8b8b8;display:flex;align-items:center;justify-content:center;flex:none}
.arr{display:block;width:0;height:0;border:5px solid transparent;border-top:6px solid #6a6a6a;border-bottom:0}
.ex{display:inline-block;position:relative;width:9px;height:9px;margin:0 2px 0 3px;background:#dfe6ef;border:1px solid #9aa7b8;vertical-align:-1px}
.ex::before{content:"";position:absolute;left:1px;top:3px;width:5px;height:1px;background:#333}
.ex::after{content:"";position:absolute;left:3px;top:1px;width:1px;height:5px;background:#333}
.ex.m::after{display:none}
.q{padding-left:19px}

/* slicer */
.slicer{position:absolute;left:322px;top:354px;width:202px;height:134px;background:#fff;border:1px solid #5b9bd5;padding:0 8px;font:14px Lato,sans-serif;color:#111}
.sl-head{height:29px;display:grid;grid-template-columns:1fr 32px 20px;align-items:center;font-weight:700;border-bottom:1px solid #5b9bd5;margin-bottom:4px}
.sl-item{height:27px;margin-bottom:3px;background:#bdd7ee;border:1px solid #9d9d9d;border-radius:3px;padding-left:8px;line-height:25px;width:183px;letter-spacing:-.8px}

/* chart */
.chart{position:absolute;left:857px;top:451px;width:420px;height:215px;margin:0;background:#fff;border:1px solid #d4d4d4}
.chart figcaption{text-align:center;font:12px Lato,sans-serif;color:#595959;padding-top:10px}
.chart-svg{position:absolute;left:0;top:0}
.dl{font:7.500px Lato,sans-serif;fill:#595959}

/* scrollbars */
.vscroll{width:30px;display:flex;flex-direction:column;padding:1px 3px 0 2px;flex:none}
.sb{background:#fff;border:1px solid #ababab;padding:0;display:flex;align-items:center;justify-content:center;flex:none;width:25px;height:25px}
.vthumb{height:446px;background:#fff;border:1px solid #ababab;border-top:0;flex:none}
.vtrack{height:167px;background:#dbdbdb;flex:none}
.tri-up,.tri-down,.tri-left,.tri-right{display:block;width:0;height:0;border:solid transparent}
.tri-up{border-width:0 5px 6px;border-bottom-color:#6e6e6e}
.tri-down{border-width:6px 5px 0;border-top-color:#6e6e6e}
.tri-left{border-width:6px 6px 6px 0;border-right-color:#6e6e6e}
.tri-right{border-width:6px 0 6px 6px;border-left-color:#6e6e6e}

/* tabs */
.tabbar{height:34px;flex:none;background:#e6e6e6;border-top:1px solid #9a9a9a;border-bottom:1px solid #c6c6c6;display:flex;align-items:stretch;position:relative}
.tnav{width:118px;display:flex;align-items:center;padding-left:28px;gap:27px;flex:none}
.tl{display:block;border:6px solid transparent;border-left:0;border-right:6px solid #bdbdbd}
.tr{display:block;border:6px solid transparent;border-right:0;border-left:6px solid #bdbdbd}
.stab{display:flex;align-items:center;justify-content:center;font-size:18.600px;color:#555;white-space:nowrap;flex:none;position:relative;border-left:1px solid #a6a6a6;margin:3px 0 4px;padding-bottom:5px}
.w1{width:139px}.w2{width:115px}.w3{width:160px}
.w5{width:49px;border-left:0}.w6{width:122px;border-right:1px solid #a6a6a6}
.active{width:156px;margin:-1px 0 0;height:33px;background:#fff;border:1px solid #9a9a9a;border-top:0;border-bottom:3px solid #217346;color:#217346;font-weight:700;padding-bottom:4px}
.addsheet{align-self:center;margin-left:40px;flex:none}
.tdots{margin-left:342px;width:20px;display:flex;flex-direction:column;gap:4px;align-items:center;justify-content:center;flex:none}
.hscroll{margin-left:10px;height:24px;align-self:center;display:flex;flex:none}
.hb{height:24px}
.hthumb{width:520px;height:24px;background:#fff;border:1px solid #ababab;border-left:0}
.htrack{width:28px;height:24px;background:#d6d6d6}
.status{height:4px;flex:none;background:#f3f2f1}
.status span{display:block;margin-left:1475px;width:60px;height:4px;background:#c8c6c4}

/* watermark */
.watermark{position:absolute;left:845px;top:866px;width:232px;display:flex;flex-direction:column;align-items:center;pointer-events:none;color:rgba(90,90,90,.16);font-weight:700}
.wm-ar{font:700 66px/84px "DejaVu Sans",sans-serif;-webkit-text-stroke:2px rgba(90,90,90,.16)}
.wm-en{font:700 36px/38px "Open Sans",sans-serif;margin-top:-4px}
```
